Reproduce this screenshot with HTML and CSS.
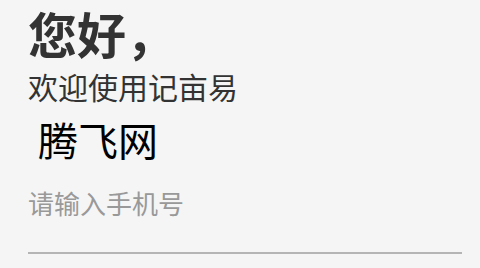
FILE: index.html
```html
<!DOCTYPE html>
<html lang="zh-CN">
<head>
  <meta charset="UTF-8" />
  <meta name="viewport" content="width=device-width, initial-scale=1" />
  <title>登录</title>
  <link rel="stylesheet" href="styles.css">
</head>
<body>
  <div class="login">
    <h1 class="hello">您好，</h1>
    <p class="welcome">欢迎使用记亩易</p>
    <p class="brand">腾飞网</p>
    <input class="phone" type="tel" placeholder="请输入手机号" />
  </div>
</body>
</html>
```

FILE: styles.css
```css
body {
  margin: 0;
  background: #f5f5f5;
  font-family: "Noto Sans CJK SC", "Noto Sans", sans-serif;
  color: #333;
}
.login {
  padding: 0 18px 0 28px;
}
.hello {
  margin: 0;
  font-size: 49px;
  font-weight: bold;
  line-height: 66px;
  color: #333;
}
.welcome {
  margin: 0;
  font-size: 30px;
  line-height: 40px;
  color: #333;
}
.brand {
  margin: 8px 0 0 10px;
  font-size: 40px;
  line-height: 50px;
  color: #000;
}
.phone {
  display: block;
  box-sizing: border-box;
  width: 100%;
  height: 87px;
  margin-top: 3px;
  padding: 0 0 14px 0;
  border: none;
  border-bottom: 2px solid #b5b5b5;
  background: transparent;
  font-family: inherit;
  font-size: 26px;
  outline: none;
}
.phone::placeholder {
  color: #999;
}
```
